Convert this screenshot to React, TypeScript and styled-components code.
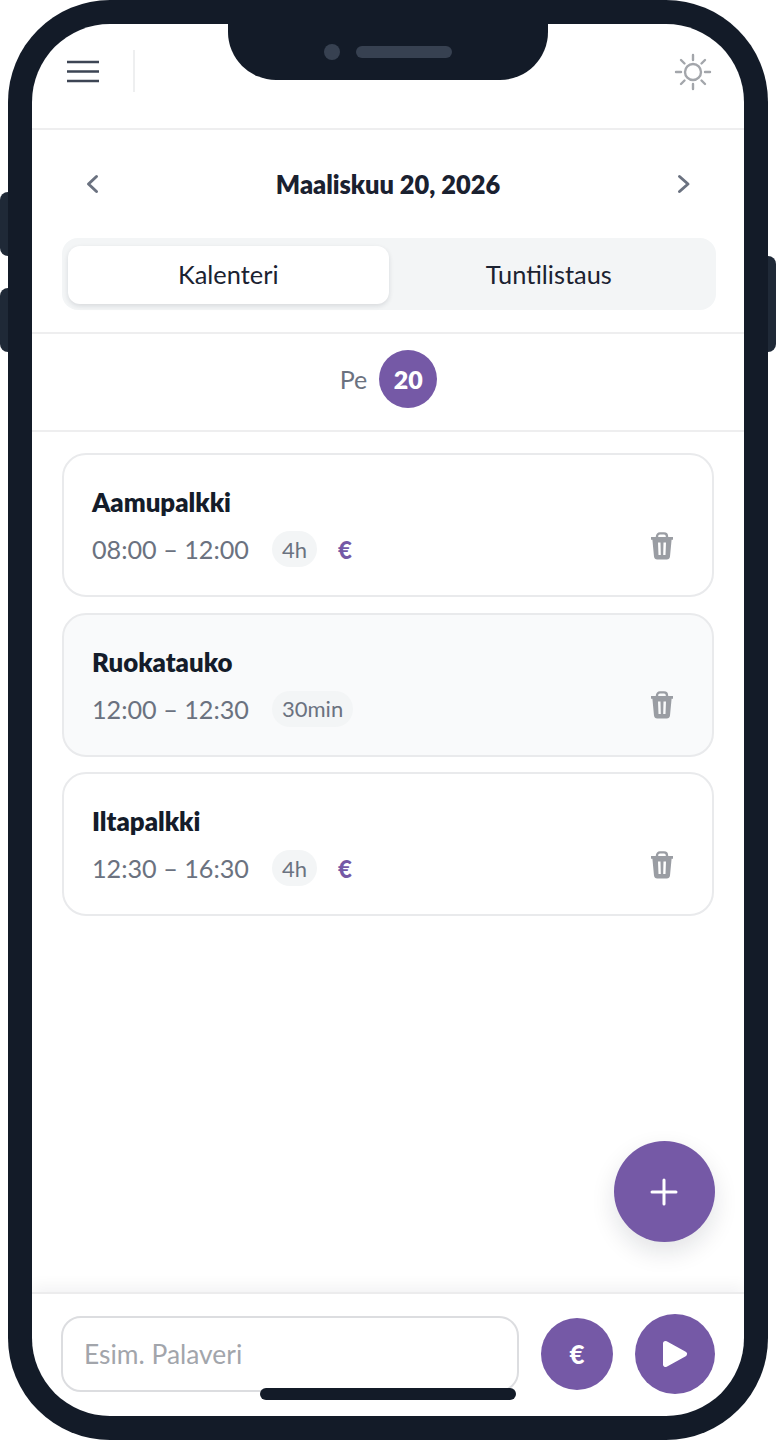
import styled, { createGlobalStyle } from 'styled-components';

const GlobalStyle = createGlobalStyle`
  html, body {
    margin: 0;
    padding: 0;
    background: #ffffff;
  }
  * {
    box-sizing: border-box;
  }
`;

const PURPLE = '#7559a6';
const FRAME = '#131b28';
const FONT = `Lato, "Noto Sans", sans-serif`;

const Stage = styled.div`
  position: relative;
  width: 776px;
  height: 1440px;
  padding: 0 8px;
  font-family: ${FONT};
`;

// 측면 버튼
const SideButton = styled.span<{ $side: 'left' | 'right'; $top: number; $h: number }>`
  position: absolute;
  ${(p) => p.$side}: 0;
  top: ${(p) => p.$top}px;
  width: 10px;
  height: ${(p) => p.$h}px;
  background: #1f2937;
  border-radius: ${(p) => (p.$side === 'left' ? '8px 0 0 8px' : '0 8px 8px 0')};
`;

const Frame = styled.div`
  position: relative;
  width: 760px;
  height: 1440px;
  padding: 24px;
  background: ${FRAME};
  border-radius: 102px;
`;

const Screen = styled.div`
  position: relative;
  display: flex;
  flex-direction: column;
  width: 712px;
  height: 1392px;
  background: #ffffff;
  border-radius: 78px;
  overflow: hidden;
`;

const Notch = styled.div`
  position: absolute;
  top: 0;
  left: 196px;
  width: 320px;
  height: 56px;
  display: flex;
  align-items: center;
  justify-content: center;
  gap: 16px;
  background: ${FRAME};
  border-radius: 0 0 48px 48px;
`;

const Camera = styled.span`
  width: 16px;
  height: 16px;
  border-radius: 50%;
  background: #374151;
`;

const Speaker = styled.span`
  width: 96px;
  height: 12px;
  border-radius: 6px;
  background: #374151;
`;

const HomeBar = styled.div`
  position: absolute;
  left: 228px;
  bottom: 16px;
  width: 256px;
  height: 12px;
  border-radius: 6px;
  background: ${FRAME};
`;

const TopBar = styled.header`
  flex: none;
  height: 106px;
  display: flex;
  align-items: flex-start;
  justify-content: space-between;
  padding: 26px 32px 0 34px;
  border-bottom: 2px solid #eeeeef;
`;

const TopLeft = styled.div`
  display: flex;
  align-items: flex-start;
  gap: 33px;
`;

const VDivider = styled.span`
  width: 2px;
  height: 42px;
  background: #eeeff0;
`;

const MenuIcon = styled.svg`
  display: block;
  width: 34px;
  height: 42px;
`;

const SunIcon = styled.svg`
  display: block;
  width: 38px;
  height: 38px;
  margin-top: 3px;
`;

const DateRow = styled.div`
  flex: none;
  height: 108px;
  display: flex;
  align-items: center;
  justify-content: space-between;
  padding: 0 48px;
`;

const DateTitle = styled.h1`
  margin: 0;
  font-size: 25.4px;
  line-height: 32px;
  font-weight: 800;
  color: #1a2130;
`;

const Chevron = styled.svg`
  display: block;
  width: 24px;
  height: 24px;
`;

const Tabs = styled.div`
  flex: none;
  display: flex;
  margin: 0 28px 0 30px;
  height: 72px;
  padding: 8px 7px 6px 6px;
  background: #f3f5f6;
  border-radius: 16px;
`;

const Tab = styled.div<{ $active?: boolean }>`
  flex: 1;
  display: flex;
  align-items: center;
  justify-content: center;
  padding-bottom: 2px;
  font-size: 25.4px;
  color: #1b2231;
  border-radius: 12px;
  background: ${(p) => (p.$active ? '#ffffff' : 'transparent')};
  box-shadow: ${(p) => (p.$active ? '0 2px 5px rgba(20, 28, 42, 0.12)' : 'none')};
`;

const DayRow = styled.div`
  flex: none;
  margin-top: 22px;
  height: 100px;
  display: flex;
  align-items: center;
  justify-content: center;
  gap: 12px;
  padding: 0 0 6px 1px;
  border-top: 2px solid #eeeeef;
  border-bottom: 2px solid #eeeeef;
`;

const DayName = styled.span`
  font-size: 25px;
  color: #6b7280;
`;

const DayBadge = styled.span`
  width: 58px;
  height: 58px;
  display: flex;
  align-items: center;
  justify-content: center;
  border-radius: 50%;
  background: ${PURPLE};
  color: #ffffff;
  font-size: 25px;
  font-weight: 800;
`;

const Main = styled.main`
  position: relative;
  flex: 1;
  display: flex;
  flex-direction: column;
  gap: 15.5px;
  padding: 21px 30px 0;
`;

const Card = styled.article<{ $muted?: boolean }>`
  height: 144px;
  display: flex;
  align-items: center;
  justify-content: space-between;
  padding: 3px 37px 0 28px;
  border: 2px solid #e9eaec;
  border-radius: 24px;
  background: ${(p) => (p.$muted ? '#f9fafb' : '#ffffff')};
`;

const CardBody = styled.div`
  display: flex;
  flex-direction: column;
  gap: 13px;
`;

const CardTitle = styled.h2`
  margin: 0;
  font-size: 25.8px;
  line-height: 32px;
  font-weight: 800;
  color: #141c2a;
`;

const CardMeta = styled.div`
  display: flex;
  align-items: center;
  height: 36px;
`;

const TimeText = styled.span`
  width: 180px;
  font-size: 25.2px;
  color: #6b7280;
`;

const Duration = styled.span`
  height: 36px;
  display: flex;
  align-items: center;
  padding: 0 10px;
  border-radius: 18px;
  background: #f3f5f6;
  font-size: 22px;
  color: #6b7280;
`;

const EuroMark = styled.span`
  margin-left: 21px;
  font-size: 24px;
  font-weight: 900;
  color: ${PURPLE};
`;

const TrashIcon = styled.svg`
  display: block;
  width: 24px;
  height: 28px;
  margin: 38px 1px 0 0;
`;

const Fab = styled.button`
  position: absolute;
  right: 29px;
  bottom: 50px;
  width: 101px;
  height: 101px;
  display: flex;
  align-items: center;
  justify-content: center;
  padding: 0 1px 0 0;
  border: none;
  border-radius: 50%;
  background: ${PURPLE};
  box-shadow: 0 10px 24px rgba(20, 28, 42, 0.12);
`;

const FooterBar = styled.footer`
  flex: none;
  height: 124px;
  display: flex;
  align-items: flex-start;
  padding: 22px 29px 0 29px;
  border-top: 2px solid #ececed;
  box-shadow: 0 -6px 14px rgba(20, 28, 42, 0.05);
`;

const NameInput = styled.input`
  width: 458px;
  height: 76px;
  padding: 0 21px;
  border: 2px solid #dcdde0;
  border-radius: 20px;
  background: #ffffff;
  font-family: ${FONT};
  font-size: 26.4px;
  outline: none;
  &::placeholder {
    color: #a2a5ab;
    opacity: 1;
  }
`;

const RoundButton = styled.button<{ $size: number }>`
  flex: none;
  width: ${(p) => p.$size}px;
  height: ${(p) => p.$size}px;
  display: flex;
  align-items: center;
  justify-content: center;
  padding: 0;
  border: none;
  border-radius: 50%;
  background: ${PURPLE};
  color: #ffffff;
  font-family: ${FONT};
  font-size: 26px;
  font-weight: 900;
`;

const EuroButton = styled(RoundButton)`
  margin: 2px 0 0 22px;
`;

const PlayButton = styled(RoundButton)`
  margin: -2px 0 0 22px;
`;

const Sun = () => (
  <SunIcon viewBox="0 0 38 38" fill="none" stroke="#a3a6ab" strokeWidth="2.4" strokeLinecap="round">
    <circle cx="19" cy="19" r="8" />
    <path d="M19 2v5M19 31v5M2 19h5M31 19h5M7 7l3.5 3.5M27.5 27.5L31 31M7 31l3.5-3.5M27.5 10.500L31 7" />
  </SunIcon>
);

const Trash = () => (
  <TrashIcon viewBox="0 0 24 28">
    <path
      fill="none"
      stroke="#9a9da3"
      strokeWidth="2.4"
      d="M7 6V4.500C7 2.600 8.400 1.400 10 1.400h4c1.600 0 3 1.200 3 3.100V6"
    />
    <path
      fillRule="evenodd"
      fill="#9a9da3"
      d="M1 5h22v2.800h-1.400L20 24.500c-.2 1.900-1.400 3-3.200 3H7.200c-1.800 0-3-1.100-3.200-3L2.400 7.800H1zM8 10.500l.5 12.500h2.300L10.500 10.500zM13.500 10.500L13.200 23h2.300l.5-12.500z"
    />
  </TrashIcon>
);

const shifts = [
  { title: 'Aamupalkki', time: '08:00 – 12:00', length: '4h', paid: true },
  { title: 'Ruokatauko', time: '12:00 – 12:30', length: '30min', paid: false },
  { title: 'Iltapalkki', time: '12:30 – 16:30', length: '4h', paid: true },
];

const App = () => {
  return (
    <Stage>
      <GlobalStyle />
      <SideButton $side="left" $top={192} $h={64} />
      <SideButton $side="left" $top={288} $h={64} />
      <SideButton $side="right" $top={256} $h={96} />
      <Frame>
        <Screen>
          <TopBar>
            <TopLeft>
              <MenuIcon viewBox="0 0 34 42" fill="none" stroke="#3d4554" strokeWidth="2.6">
                <path d="M1 12h32M1 21.500h32M1 31h32" />
              </MenuIcon>
              <VDivider />
            </TopLeft>
            <Sun />
          </TopBar>

          <DateRow>
            <Chevron viewBox="0 0 24 24" fill="none" stroke="#6b7280" strokeWidth="3" strokeLinecap="round" strokeLinejoin="round">
              <path d="M16.500 4.500L8.500 12l8 7.500" />
            </Chevron>
            <DateTitle>Maaliskuu 20, 2026</DateTitle>
            <Chevron viewBox="0 0 24 24" fill="none" stroke="#6b7280" strokeWidth="3" strokeLinecap="round" strokeLinejoin="round">
              <path d="M7.500 4.500l8.500 7.500-8.500 7.500" />
            </Chevron>
          </DateRow>

          <Tabs>
            <Tab $active>Kalenteri</Tab>
            <Tab>Tuntilistaus</Tab>
          </Tabs>

          <DayRow>
            <DayName>Pe</DayName>
            <DayBadge>20</DayBadge>
          </DayRow>

          <Main>
            {shifts.map((shift) => (
              <Card key={shift.title} $muted={!shift.paid}>
                <CardBody>
                  <CardTitle>{shift.title}</CardTitle>
                  <CardMeta>
                    <TimeText>{shift.time}</TimeText>
                    <Duration>{shift.length}</Duration>
                    {shift.paid && <EuroMark>€</EuroMark>}
                  </CardMeta>
                </CardBody>
                <Trash />
              </Card>
            ))}
            <Fab aria-label="Lisää">
              <svg width="30" height="30" viewBox="0 0 30 30" fill="none" stroke="#ffffff" strokeWidth="3" strokeLinecap="round">
                <path d="M15 3v24M3 15h24" />
              </svg>
            </Fab>
          </Main>

          <FooterBar>
            <NameInput placeholder="Esim. Palaveri" readOnly />
            <EuroButton $size={72}>€</EuroButton>
            <PlayButton $size={80}>
              <svg width="26" height="28" viewBox="0 0 26 28">
                <path fill="#ffffff" stroke="#ffffff" strokeWidth="5" strokeLinejoin="round" d="M3.500 3.500L22.500 14 3.500 24.500z" />
              </svg>
            </PlayButton>
          </FooterBar>

          <Notch>
            <Camera />
            <Speaker />
          </Notch>
          <HomeBar />
        </Screen>
      </Frame>
    </Stage>
  );
};

export default App;
